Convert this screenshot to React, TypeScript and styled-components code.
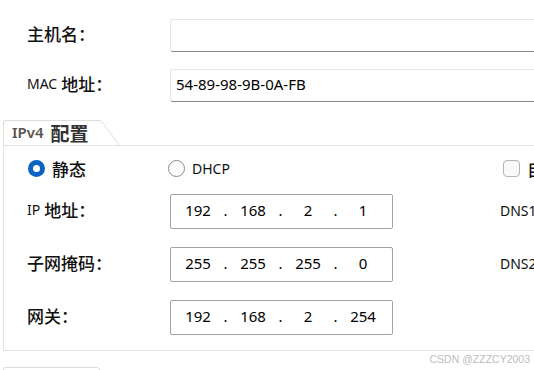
import { Fragment } from 'react';
import styled, { createGlobalStyle } from 'styled-components';

const latin = `"Noto Sans", "Noto Sans CJK SC", sans-serif`;
const han = `"Noto Sans CJK SC", sans-serif`;

const GlobalStyle = createGlobalStyle`
  body {
    margin: 0;
    background: #ffffff;
  }
`;

const Page = styled.div`
  position: relative;
  width: 534px;
  height: 370px;
  overflow: hidden;
  box-sizing: border-box;
  padding-top: 19px;
  background: #ffffff;
  font-family: ${latin};
  color: #111;
`;

const Fields = styled.div`
  display: grid;
  grid-template-columns: 143px 420px;
  grid-auto-rows: 33px;
  row-gap: 17px;
  padding-left: 27px;
`;

const Label = styled.span`
  display: flex;
  align-items: center;
  gap: 4px;
  padding-bottom: 5px;
  font-size: 14px;
  white-space: nowrap;
`;

const Han = styled.span<{ $size?: number; $bold?: boolean }>`
  font-family: ${han};
  font-size: ${({ $size }) => $size ?? 17}px;
  font-weight: ${({ $bold }) => ($bold ? 700 : 500)};
`;

const TextBox = styled.div`
  box-sizing: border-box;
  height: 33px;
  display: flex;
  align-items: center;
  padding: 0 0 3px 5px;
  border: 1px solid #e6e6e6;
  border-bottom: 1px solid #878787;
  border-radius: 3px;
  background: #fff;
  font-size: 15px;
  color: #000;
`;

const Tab = styled.div`
  position: relative;
  box-sizing: border-box;
  width: 97px;
  height: 25px;
  margin: 18px 0 0 3px;
  padding: 0 0 2px 8px;
  display: flex;
  align-items: center;
  gap: 7px;
  border-left: 1px solid #dedede;
  border-top: 1px solid #dedede;
  border-top-left-radius: 3px;
  &::after {
    content: '';
    position: absolute;
    left: 100%;
    top: -1px;
    height: 25px;
    border-right: 1px solid #dedede;
    transform: skewX(37deg);
    transform-origin: top left;
  }
`;

const TabLatin = styled.span`
  font-size: 15px;
  font-weight: 600;
  color: #5a5550;
`;

const TabHan = styled(Han)`
  color: #333;
`;

const Panel = styled.div`
  box-sizing: border-box;
  width: 640px;
  height: 206px;
  margin-left: 3px;
  padding: 14px 0 0 23px;
  display: flex;
  flex-direction: column;
  gap: 18px;
  border: 1px solid #e2e2e2;
`;

const Row = styled.div<{ $h: number }>`
  display: grid;
  grid-template-columns: 143px 330px auto;
  grid-template-rows: ${({ $h }) => $h}px;
  align-items: center;
  height: ${({ $h }) => $h}px;
`;

const Choice = styled.label<{ $shift?: number }>`
  display: flex;
  align-items: center;
  gap: 7px;
  margin-left: ${({ $shift }) => $shift ?? 0}px;
  font-size: 14px;
  white-space: nowrap;
`;

const Radio = styled.span<{ $on?: boolean }>`
  box-sizing: border-box;
  width: 17px;
  height: 17px;
  border-radius: 50%;
  display: inline-flex;
  align-items: center;
  justify-content: center;
  background: ${({ $on }) => ($on ? '#0a62c2' : '#fdfdfd')};
  border: ${({ $on }) => ($on ? 'none' : '1px solid #8a8a8a')};
  &::after {
    content: '';
    display: ${({ $on }) => ($on ? 'block' : 'none')};
    width: 7px;
    height: 7px;
    border-radius: 50%;
    background: #fff;
  }
`;

const Check = styled.span`
  box-sizing: border-box;
  width: 17px;
  height: 17px;
  border: 1px solid #b4b4b4;
  border-radius: 4px;
  background: #f9f9f9;
`;

const IpBox = styled.div`
  box-sizing: border-box;
  width: 223px;
  height: 35px;
  display: flex;
  align-items: center;
  padding: 0 0 4px 5px;
  border: 1px solid #a3a3a3;
  border-radius: 2px;
  background: #fff;
  font-size: 15px;
  color: #000;
`;

const Octet = styled.span`
  width: 44px;
  text-align: center;
`;

const Dot = styled.span`
  width: 11px;
  text-align: center;
`;

const Side = styled.span`
  padding-bottom: 4px;
  font-size: 14px;
  white-space: nowrap;
`;

const Footer = styled.div`
  margin: 16px 0 0 3px;
`;

const FooterButton = styled.div`
  width: 97px;
  height: 30px;
  box-sizing: border-box;
  border: 1px solid #dcdcdc;
  border-radius: 3px;
`;

const Watermark = styled.span`
  position: absolute;
  right: 4px;
  bottom: 5px;
  font-family: "Liberation Sans", sans-serif;
  font-size: 10.5px;
  color: #bdbdbd;
`;

function IpField({ value }: { value: string }) {
  const parts = value.split('.');
  return (
    <IpBox>
      {parts.map((p, i) => (
        <Fragment key={i}>
          {i > 0 && <Dot>.</Dot>}
          <Octet>{p}</Octet>
        </Fragment>
      ))}
    </IpBox>
  );
}

export default function App() {
  return (
    <Page>
      <GlobalStyle />
      <Fields>
        <Label>
          <Han>主机名：</Han>
        </Label>
        <TextBox />
        <Label>
          MAC<Han>地址：</Han>
        </Label>
        <TextBox>54-89-98-9B-0A-FB</TextBox>
      </Fields>

      <Tab>
        <TabLatin>IPv4</TabLatin>
        <TabHan $size={19} $bold>
          配置
        </TabHan>
      </Tab>
      <Panel>
        <Row $h={16}>
          <Choice $shift={1}>
            <Radio $on />
            <Han>静态</Han>
          </Choice>
          <Choice $shift={-2}>
            <Radio />
            DHCP
          </Choice>
          <Choice $shift={3}>
            <Check />
            <Han>自动获得DNS服务器地址</Han>
          </Choice>
        </Row>
        <Row $h={35}>
          <Label>
            IP<Han>地址：</Han>
          </Label>
          <IpField value="192.168.2.1" />
          <Side>DNS1：</Side>
        </Row>
        <Row $h={35}>
          <Label>
            <Han>子网掩码：</Han>
          </Label>
          <IpField value="255.255.255.0" />
          <Side>DNS2：</Side>
        </Row>
        <Row $h={35}>
          <Label>
            <Han>网关：</Han>
          </Label>
          <IpField value="192.168.2.254" />
        </Row>
      </Panel>
      <Footer>
        <FooterButton />
      </Footer>
      <Watermark>CSDN @ZZZCY2003</Watermark>
    </Page>
  );
}
